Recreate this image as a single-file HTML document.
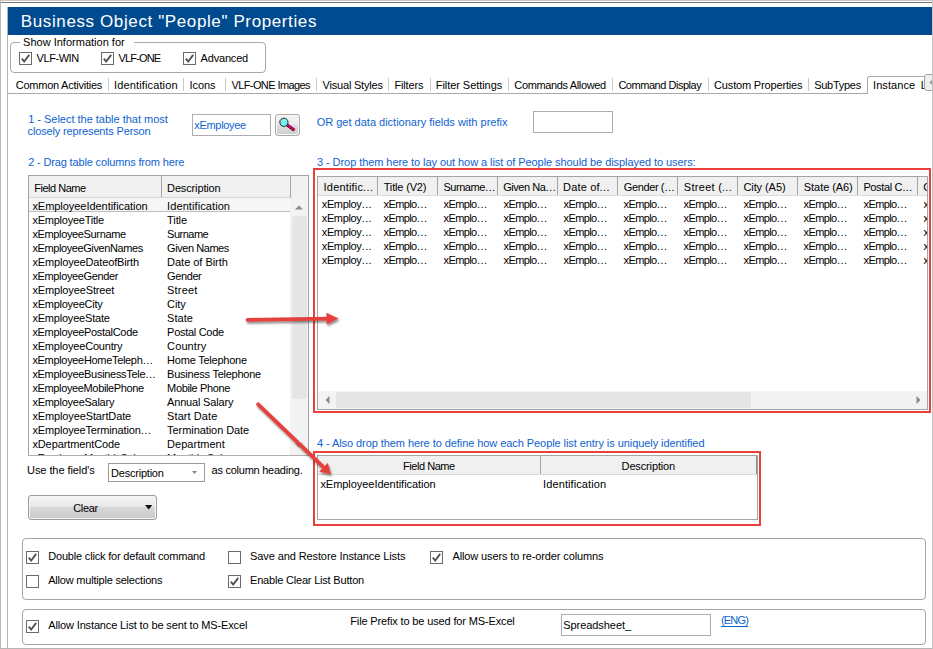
<!DOCTYPE html>
<html lang="en"><head><meta charset="utf-8"><title>Business Object "People" Properties</title>
<style>
html,body{margin:0;padding:0;background:#fff}
body{width:933px;height:649px;position:relative;overflow:hidden;font-family:'Liberation Sans', sans-serif;font-size:11px}
.t{position:absolute;white-space:pre}
</style></head><body>
<div style="position:absolute;left:0px;top:0px;width:933px;height:1px;background:#c9c9c9"></div>
<div style="position:absolute;left:0px;top:2px;width:933px;height:1px;background:#777"></div>
<div style="position:absolute;left:0px;top:0px;width:1px;height:649px;background:#b9b9b9"></div>
<div style="position:absolute;left:932px;top:0px;width:1px;height:649px;background:#c4c4c4"></div>
<div style="position:absolute;left:0px;top:648px;width:933px;height:1px;background:#b5b5b5"></div>
<div style="position:absolute;left:8px;top:7px;width:924px;height:28px;background:#004b8f"></div>
<div style="position:absolute;left:10px;top:42px;width:254px;height:29px;border:1px solid #a8a8a8;border-radius:4px"></div>
<div style="position:absolute;left:20px;top:41px;width:114px;height:3px;background:#fff"></div>
<div style="position:absolute;left:19px;top:52px;width:11px;height:11px;border:1px solid #6a6a6a;background:#fff"></div><svg style="position:absolute;left:19px;top:52px" width="13" height="13" viewBox="0 0 13 13"><path d="M2.8 6.6 L5.2 9.6 L10.2 2.9" fill="none" stroke="#505050" stroke-width="1.85" stroke-linecap="butt" stroke-linejoin="miter"/></svg>
<div style="position:absolute;left:101px;top:52px;width:11px;height:11px;border:1px solid #6a6a6a;background:#fff"></div><svg style="position:absolute;left:101px;top:52px" width="13" height="13" viewBox="0 0 13 13"><path d="M2.8 6.6 L5.2 9.6 L10.2 2.9" fill="none" stroke="#505050" stroke-width="1.85" stroke-linecap="butt" stroke-linejoin="miter"/></svg>
<div style="position:absolute;left:183px;top:52px;width:11px;height:11px;border:1px solid #6a6a6a;background:#fff"></div><svg style="position:absolute;left:183px;top:52px" width="13" height="13" viewBox="0 0 13 13"><path d="M2.8 6.6 L5.2 9.6 L10.2 2.9" fill="none" stroke="#505050" stroke-width="1.85" stroke-linecap="butt" stroke-linejoin="miter"/></svg>
<div style="position:absolute;left:108px;top:78px;width:1px;height:13px;background:#c8c8c8"></div>
<div style="position:absolute;left:183px;top:78px;width:1px;height:13px;background:#c8c8c8"></div>
<div style="position:absolute;left:225px;top:78px;width:1px;height:13px;background:#c8c8c8"></div>
<div style="position:absolute;left:316px;top:78px;width:1px;height:13px;background:#c8c8c8"></div>
<div style="position:absolute;left:388px;top:78px;width:1px;height:13px;background:#c8c8c8"></div>
<div style="position:absolute;left:430px;top:78px;width:1px;height:13px;background:#c8c8c8"></div>
<div style="position:absolute;left:508px;top:78px;width:1px;height:13px;background:#c8c8c8"></div>
<div style="position:absolute;left:612px;top:78px;width:1px;height:13px;background:#c8c8c8"></div>
<div style="position:absolute;left:708px;top:78px;width:1px;height:13px;background:#c8c8c8"></div>
<div style="position:absolute;left:808px;top:78px;width:1px;height:13px;background:#c8c8c8"></div>
<div style="position:absolute;left:8px;top:93px;width:925px;height:1px;background:#a9a9a9"></div>
<div style="position:absolute;left:7px;top:7px;width:1px;height:642px;background:#b4b4b4"></div>
<div style="position:absolute;left:867px;top:76px;width:70px;height:17px;border:1px solid #a9a9a9;border-bottom:none;border-radius:3px 0 0 0;background:#fff"></div>
<div style="position:absolute;left:192px;top:114px;width:77px;height:20px;border:1px solid #abadb3;background:#fff"></div>
<div style="position:absolute;left:275px;top:114px;width:23px;height:20px;border:1px solid #a9a9a9;border-radius:3px;box-shadow:inset 0 0 0 1px #f8f8f8;background:linear-gradient(#f3f3f3 0,#ebebeb 48%,#dddddd 52%,#cfcfcf 100%)"></div>
<svg style="position:absolute;left:275px;top:114px" width="25" height="22" viewBox="0 0 25 22">
<path d="M12.2 10.9 L19.4 16.3" stroke="#3b0a1c" stroke-width="3.1" stroke-linecap="butt"/>
<path d="M12.0 10.5 L19.3 15.9" stroke="#e6006c" stroke-width="1.9" stroke-linecap="butt"/>
<circle cx="8.9" cy="8.3" r="4.15" fill="#5cf0f2" stroke="#2a2a2a" stroke-width="1"/>
<path d="M5.1 9.8 A4.15 4.15 0 0 1 6.2 5.2" stroke="#c85a5a" stroke-width="1" fill="none"/>
<path d="M6.6 7.4 h1 M8.6 6.4 h1 M7.6 9.4 h1 M9.6 8.4 h1 M8.6 10.4 h1 M10.6 6.8 h0.8" stroke="#d8ffff" stroke-width="0.9"/>
</svg>
<div style="position:absolute;left:533px;top:111px;width:78px;height:20px;border:1px solid #abadb3;background:#fff"></div>
<div style="position:absolute;left:28px;top:175px;width:281px;height:281px;background:#fff"></div>
<div style="position:absolute;left:29px;top:176px;width:279px;height:22px;background:#f1f1f1"></div>
<div style="position:absolute;left:29px;top:197px;width:261px;height:1px;background:#d9d9d9"></div>
<div style="position:absolute;left:161px;top:176px;width:1px;height:21px;background:#a5a5a5"></div>
<div style="position:absolute;left:290px;top:176px;width:1px;height:22px;background:#a5a5a5"></div>
<div style="position:absolute;left:29px;top:198px;width:261px;height:13px;background:#f6f6f6"></div>
<div style="position:absolute;left:29px;top:211px;width:261px;height:1px;background:#bdbdbd"></div>
<div style="position:absolute;left:290px;top:198px;width:18px;height:257px;background:#f3f3f3"></div>
<svg style="position:absolute;left:295px;top:205px" width="8" height="5"><path d="M0 4.5 L4 0.5 L8 4.5Z" fill="#8a8a8a"/></svg>
<div style="position:absolute;left:291.5px;top:216px;width:15px;height:183px;background:#e6e6e6;border-radius:2px"></div>
<svg style="position:absolute;left:295px;top:443px" width="8" height="5"><path d="M0 0.5 L4 4.5 L8 0.5Z" fill="#8a8a8a"/></svg>
<div style="position:absolute;left:108px;top:463px;width:95px;height:17px;border:1px solid #9a9a9a;background:#fff"></div>
<svg style="position:absolute;left:192px;top:471px" width="5" height="3"><path d="M0 0 L5 0 L2.5 3Z" fill="#858585"/></svg>
<div style="position:absolute;left:28px;top:495px;width:127px;height:23px;border:1px solid #9c9c9c;border-radius:3px;box-shadow:inset 0 0 0 1px #f6f6f6;background:linear-gradient(#f4f4f4 0,#e9e9e9 45%,#d8d8d8 50%,#cacaca 100%)"></div>
<svg style="position:absolute;left:145px;top:505px" width="8" height="5"><path d="M0 0 L7.4 0 L3.7 4.4Z" fill="#111"/></svg>
<div style="position:absolute;left:318px;top:177px;width:609px;height:232px;background:#fff"></div>
<div style="position:absolute;left:318px;top:177px;width:609px;height:18px;background:#f0f0f0"></div>
<div style="position:absolute;left:318px;top:195px;width:609px;height:1px;background:#dcdcdc"></div>
<div style="position:absolute;left:377px;top:177px;width:1px;height:18px;background:#a5a5a5"></div>
<div style="position:absolute;left:437px;top:177px;width:1px;height:18px;background:#a5a5a5"></div>
<div style="position:absolute;left:497px;top:177px;width:1px;height:18px;background:#a5a5a5"></div>
<div style="position:absolute;left:557px;top:177px;width:1px;height:18px;background:#a5a5a5"></div>
<div style="position:absolute;left:617px;top:177px;width:1px;height:18px;background:#a5a5a5"></div>
<div style="position:absolute;left:677px;top:177px;width:1px;height:18px;background:#a5a5a5"></div>
<div style="position:absolute;left:737px;top:177px;width:1px;height:18px;background:#a5a5a5"></div>
<div style="position:absolute;left:797px;top:177px;width:1px;height:18px;background:#a5a5a5"></div>
<div style="position:absolute;left:857px;top:177px;width:1px;height:18px;background:#a5a5a5"></div>
<div style="position:absolute;left:917px;top:177px;width:1px;height:18px;background:#a5a5a5"></div>
<div style="position:absolute;left:318px;top:391px;width:609px;height:18px;background:#f3f3f3"></div>
<svg style="position:absolute;left:325px;top:396px" width="5" height="8"><path d="M4.5 0 L0.5 4 L4.5 8Z" fill="#8a8a8a"/></svg>
<svg style="position:absolute;left:916px;top:396px" width="5" height="8"><path d="M0.5 0 L4.5 4 L0.5 8Z" fill="#8a8a8a"/></svg>
<div style="position:absolute;left:336px;top:392px;width:415px;height:16px;background:#e6e6e6;border-radius:2px"></div>
<div style="position:absolute;left:318px;top:456px;width:439px;height:63px;background:#fff"></div>
<div style="position:absolute;left:318px;top:456px;width:439px;height:18px;background:#f0f0f0"></div>
<div style="position:absolute;left:318px;top:474px;width:439px;height:1px;background:#d9d9d9"></div>
<div style="position:absolute;left:540px;top:456px;width:1px;height:18px;background:#a5a5a5"></div>
<div style="position:absolute;left:756px;top:456px;width:1px;height:18px;background:#8a8a8a"></div>
<div style="position:absolute;left:22px;top:538px;width:902px;height:60px;border:1px solid #a4a4a4;border-radius:4px"></div>
<div style="position:absolute;left:22px;top:609px;width:902px;height:34px;border:1px solid #a4a4a4;border-radius:4px"></div>
<div style="position:absolute;left:26px;top:551px;width:11px;height:11px;border:1px solid #6a6a6a;background:#fff"></div><svg style="position:absolute;left:26px;top:551px" width="13" height="13" viewBox="0 0 13 13"><path d="M2.8 6.6 L5.2 9.6 L10.2 2.9" fill="none" stroke="#505050" stroke-width="1.85" stroke-linecap="butt" stroke-linejoin="miter"/></svg>
<div style="position:absolute;left:26px;top:575px;width:11px;height:11px;border:1px solid #6a6a6a;background:#fff"></div>
<div style="position:absolute;left:228px;top:551px;width:11px;height:11px;border:1px solid #6a6a6a;background:#fff"></div>
<div style="position:absolute;left:228px;top:575px;width:11px;height:11px;border:1px solid #6a6a6a;background:#fff"></div><svg style="position:absolute;left:228px;top:575px" width="13" height="13" viewBox="0 0 13 13"><path d="M2.8 6.6 L5.2 9.6 L10.2 2.9" fill="none" stroke="#505050" stroke-width="1.85" stroke-linecap="butt" stroke-linejoin="miter"/></svg>
<div style="position:absolute;left:430px;top:551px;width:11px;height:11px;border:1px solid #6a6a6a;background:#fff"></div><svg style="position:absolute;left:430px;top:551px" width="13" height="13" viewBox="0 0 13 13"><path d="M2.8 6.6 L5.2 9.6 L10.2 2.9" fill="none" stroke="#505050" stroke-width="1.85" stroke-linecap="butt" stroke-linejoin="miter"/></svg>
<div style="position:absolute;left:26px;top:620px;width:11px;height:11px;border:1px solid #6a6a6a;background:#fff"></div><svg style="position:absolute;left:26px;top:620px" width="13" height="13" viewBox="0 0 13 13"><path d="M2.8 6.6 L5.2 9.6 L10.2 2.9" fill="none" stroke="#505050" stroke-width="1.85" stroke-linecap="butt" stroke-linejoin="miter"/></svg>
<div style="position:absolute;left:561px;top:614px;width:148px;height:20px;border:1px solid #abadb3;background:#fff"></div>
<span class="t" style="left:20.80px;top:12.00px;font-size:17px;line-height:19px;color:#fff;letter-spacing:0.613px;">Business Object "People" Properties</span>
<span class="t" style="left:23.10px;top:36.00px;font-size:11px;line-height:12px;color:#000;letter-spacing:0.005px;">Show Information for</span>
<span class="t" style="left:36.60px;top:52.00px;font-size:11px;line-height:12px;color:#000;letter-spacing:-0.439px;">VLF-WIN</span>
<span class="t" style="left:118.60px;top:52.00px;font-size:11px;line-height:12px;color:#000;letter-spacing:-0.848px;">VLF-ONE</span>
<span class="t" style="left:200.60px;top:52.00px;font-size:11px;line-height:12px;color:#000;letter-spacing:-0.191px;">Advanced</span>
<span class="t" style="left:15.70px;top:79.00px;font-size:11px;line-height:12px;color:#000;letter-spacing:-0.237px;">Common Activities</span>
<span class="t" style="left:114.10px;top:79.00px;font-size:11px;line-height:12px;color:#000;letter-spacing:0.126px;">Identification</span>
<span class="t" style="left:189.60px;top:79.00px;font-size:11px;line-height:12px;color:#000;letter-spacing:-0.074px;">Icons</span>
<span class="t" style="left:231.40px;top:79.00px;font-size:11px;line-height:12px;color:#000;letter-spacing:-0.586px;">VLF-ONE Images</span>
<span class="t" style="left:322.60px;top:79.00px;font-size:11px;line-height:12px;color:#000;letter-spacing:-0.207px;">Visual Styles</span>
<span class="t" style="left:394.60px;top:79.00px;font-size:11px;line-height:12px;color:#000;letter-spacing:-0.192px;">Filters</span>
<span class="t" style="left:435.80px;top:79.00px;font-size:11px;line-height:12px;color:#000;letter-spacing:-0.061px;">Filter Settings</span>
<span class="t" style="left:514.30px;top:79.00px;font-size:11px;line-height:12px;color:#000;letter-spacing:-0.355px;">Commands Allowed</span>
<span class="t" style="left:618.40px;top:79.00px;font-size:11px;line-height:12px;color:#000;letter-spacing:-0.470px;">Command Display</span>
<span class="t" style="left:714.10px;top:79.00px;font-size:11px;line-height:12px;color:#000;letter-spacing:-0.168px;">Custom Properties</span>
<span class="t" style="left:814.20px;top:79.00px;font-size:11px;line-height:12px;color:#000;letter-spacing:-0.275px;">SubTypes</span>
<span class="t" style="left:873.00px;top:79.00px;font-size:11px;line-height:12px;color:#000;letter-spacing:0.072px;">Instance</span>
<div style="position:absolute;left:921px;top:0;width:4px;height:649px;overflow:hidden"><span class="t" style="left:-0.20px;top:79.00px;font-size:11px;line-height:12px;color:#000;">L</span></div>
<span class="t" style="left:28.20px;top:113.00px;font-size:11px;line-height:12px;color:#0e63cf;letter-spacing:-0.015px;">1 - Select the table that most</span>
<span class="t" style="left:27.60px;top:125.00px;font-size:11px;line-height:12px;color:#0e63cf;letter-spacing:-0.148px;">closely represents Person</span>
<span class="t" style="left:194.30px;top:119.00px;font-size:11px;line-height:12px;color:#0e63cf;letter-spacing:-0.315px;">xEmployee</span>
<span class="t" style="left:316.70px;top:116.00px;font-size:11px;line-height:12px;color:#0e63cf;">OR get data dictionary fields with prefix</span>
<span class="t" style="left:28.20px;top:155.60px;font-size:11px;line-height:12px;color:#0e63cf;letter-spacing:-0.152px;">2 - Drag table columns from here</span>
<span class="t" style="left:34.20px;top:182.00px;font-size:11px;line-height:12px;color:#000;letter-spacing:-0.472px;">Field Name</span>
<span class="t" style="left:167.10px;top:182.00px;font-size:11px;line-height:12px;color:#000;letter-spacing:-0.143px;">Description</span>
<span class="t" style="left:32.40px;top:200.00px;font-size:11px;line-height:12px;color:#000;letter-spacing:-0.040px;">xEmployeeIdentification</span>
<span class="t" style="left:167.10px;top:200.00px;font-size:11px;line-height:12px;color:#000;letter-spacing:0.087px;">Identification</span>
<span class="t" style="left:32.40px;top:214.00px;font-size:11px;line-height:12px;color:#000;letter-spacing:-0.238px;">xEmployeeTitle</span>
<span class="t" style="left:167.10px;top:214.00px;font-size:11px;line-height:12px;color:#000;letter-spacing:-0.094px;">Title</span>
<span class="t" style="left:32.40px;top:228.00px;font-size:11px;line-height:12px;color:#000;letter-spacing:-0.357px;">xEmployeeSurname</span>
<span class="t" style="left:167.10px;top:228.00px;font-size:11px;line-height:12px;color:#000;letter-spacing:-0.507px;">Surname</span>
<span class="t" style="left:32.40px;top:242.00px;font-size:11px;line-height:12px;color:#000;letter-spacing:-0.400px;">xEmployeeGivenNames</span>
<span class="t" style="left:167.10px;top:242.00px;font-size:11px;line-height:12px;color:#000;letter-spacing:-0.444px;">Given Names</span>
<span class="t" style="left:32.40px;top:256.00px;font-size:11px;line-height:12px;color:#000;letter-spacing:-0.145px;">xEmployeeDateofBirth</span>
<span class="t" style="left:167.10px;top:256.00px;font-size:11px;line-height:12px;color:#000;letter-spacing:-0.028px;">Date of Birth</span>
<span class="t" style="left:32.40px;top:270.00px;font-size:11px;line-height:12px;color:#000;letter-spacing:-0.358px;">xEmployeeGender</span>
<span class="t" style="left:167.10px;top:270.00px;font-size:11px;line-height:12px;color:#000;letter-spacing:-0.401px;">Gender</span>
<span class="t" style="left:32.40px;top:284.00px;font-size:11px;line-height:12px;color:#000;letter-spacing:-0.126px;">xEmployeeStreet</span>
<span class="t" style="left:167.10px;top:284.00px;font-size:11px;line-height:12px;color:#000;letter-spacing:0.188px;">Street</span>
<span class="t" style="left:32.40px;top:298.00px;font-size:11px;line-height:12px;color:#000;letter-spacing:-0.255px;">xEmployeeCity</span>
<span class="t" style="left:167.10px;top:298.00px;font-size:11px;line-height:12px;color:#000;letter-spacing:-0.118px;">City</span>
<span class="t" style="left:32.40px;top:312.00px;font-size:11px;line-height:12px;color:#000;letter-spacing:-0.201px;">xEmployeeState</span>
<span class="t" style="left:167.10px;top:312.00px;font-size:11px;line-height:12px;color:#000;letter-spacing:0.028px;">State</span>
<span class="t" style="left:32.40px;top:326.00px;font-size:11px;line-height:12px;color:#000;letter-spacing:-0.311px;">xEmployeePostalCode</span>
<span class="t" style="left:167.10px;top:326.00px;font-size:11px;line-height:12px;color:#000;letter-spacing:-0.294px;">Postal Code</span>
<span class="t" style="left:32.40px;top:340.00px;font-size:11px;line-height:12px;color:#000;letter-spacing:-0.182px;">xEmployeeCountry</span>
<span class="t" style="left:167.10px;top:340.00px;font-size:11px;line-height:12px;color:#000;letter-spacing:0.111px;">Country</span>
<span class="t" style="left:32.40px;top:354.00px;font-size:11px;line-height:12px;color:#000;letter-spacing:-0.321px;">xEmployeeHomeTeleph<span style="letter-spacing:0.390px;margin-left:0.321px">...</span></span>
<span class="t" style="left:167.10px;top:354.00px;font-size:11px;line-height:12px;color:#000;letter-spacing:-0.228px;">Home Telephone</span>
<span class="t" style="left:32.40px;top:368.00px;font-size:11px;line-height:12px;color:#000;letter-spacing:-0.302px;">xEmployeeBusinessTele<span style="letter-spacing:0.390px;margin-left:0.302px">...</span></span>
<span class="t" style="left:167.10px;top:368.00px;font-size:11px;line-height:12px;color:#000;letter-spacing:-0.245px;">Business Telephone</span>
<span class="t" style="left:32.40px;top:382.00px;font-size:11px;line-height:12px;color:#000;letter-spacing:-0.360px;">xEmployeeMobilePhone</span>
<span class="t" style="left:167.10px;top:382.00px;font-size:11px;line-height:12px;color:#000;letter-spacing:-0.371px;">Mobile Phone</span>
<span class="t" style="left:32.40px;top:396.00px;font-size:11px;line-height:12px;color:#000;letter-spacing:-0.257px;">xEmployeeSalary</span>
<span class="t" style="left:167.10px;top:396.00px;font-size:11px;line-height:12px;color:#000;letter-spacing:-0.183px;">Annual Salary</span>
<span class="t" style="left:32.40px;top:410.00px;font-size:11px;line-height:12px;color:#000;letter-spacing:-0.123px;">xEmployeeStartDate</span>
<span class="t" style="left:167.10px;top:410.00px;font-size:11px;line-height:12px;color:#000;letter-spacing:0.074px;">Start Date</span>
<span class="t" style="left:32.40px;top:424.00px;font-size:11px;line-height:12px;color:#000;letter-spacing:-0.152px;">xEmployeeTermination<span style="letter-spacing:0.390px;margin-left:0.152px">...</span></span>
<span class="t" style="left:167.10px;top:424.00px;font-size:11px;line-height:12px;color:#000;letter-spacing:-0.070px;">Termination Date</span>
<span class="t" style="left:32.40px;top:438.00px;font-size:11px;line-height:12px;color:#000;letter-spacing:-0.106px;">xDepartmentCode</span>
<span class="t" style="left:167.10px;top:438.00px;font-size:11px;line-height:12px;color:#000;letter-spacing:0.024px;">Department</span>
<div style="position:absolute;left:0;top:0px;width:933px;height:455px;overflow:hidden"><span class="t" style="left:32.40px;top:452.00px;font-size:11px;line-height:12px;color:#000;letter-spacing:-0.301px;">xEmployeeMonthlySalary</span></div>
<div style="position:absolute;left:0;top:0px;width:933px;height:455px;overflow:hidden"><span class="t" style="left:167.10px;top:452.00px;font-size:11px;line-height:12px;color:#000;letter-spacing:-0.205px;">Monthly Salary</span></div>
<span class="t" style="left:27.10px;top:463.50px;font-size:11px;line-height:12px;color:#000;letter-spacing:-0.082px;">Use the field's</span>
<span class="t" style="left:111.10px;top:467.00px;font-size:11px;line-height:12px;color:#000;letter-spacing:-0.223px;">Description</span>
<span class="t" style="left:211.60px;top:463.50px;font-size:11px;line-height:12px;color:#000;letter-spacing:-0.253px;">as column heading.</span>
<span class="t" style="left:73.20px;top:502.00px;font-size:11px;line-height:12px;color:#000;letter-spacing:-0.299px;">Clear</span>
<span class="t" style="left:317.00px;top:156.20px;font-size:11px;line-height:12px;color:#0e63cf;letter-spacing:-0.068px;">3 - Drop them here to lay out how a list of People should be displayed to users:</span>
<span class="t" style="left:323.60px;top:181.00px;font-size:11px;line-height:12px;color:#000;letter-spacing:0.185px;">Identific<span style="letter-spacing:0.390px;margin-left:-0.185px">...</span></span>
<span class="t" style="left:383.70px;top:181.00px;font-size:11px;line-height:12px;color:#000;letter-spacing:-0.158px;">Title (V2)</span>
<span class="t" style="left:443.50px;top:181.00px;font-size:11px;line-height:12px;color:#000;letter-spacing:-0.473px;">Surname<span style="letter-spacing:0.390px;margin-left:0.473px">...</span></span>
<span class="t" style="left:503.30px;top:181.00px;font-size:11px;line-height:12px;color:#000;letter-spacing:-0.480px;">Given Na<span style="letter-spacing:0.390px;margin-left:0.480px">...</span></span>
<span class="t" style="left:563.10px;top:181.00px;font-size:11px;line-height:12px;color:#000;letter-spacing:0.172px;">Date of<span style="letter-spacing:0.390px;margin-left:-0.172px">...</span></span>
<span class="t" style="left:623.80px;top:181.00px;font-size:11px;line-height:12px;color:#000;letter-spacing:-0.389px;">Gender (<span style="letter-spacing:0.390px;margin-left:0.389px">...</span></span>
<span class="t" style="left:683.80px;top:181.00px;font-size:11px;line-height:12px;color:#000;letter-spacing:0.289px;">Street (<span style="letter-spacing:0.390px;margin-left:-0.289px">...</span></span>
<span class="t" style="left:743.40px;top:181.00px;font-size:11px;line-height:12px;color:#000;letter-spacing:-0.073px;">City (A5)</span>
<span class="t" style="left:803.80px;top:181.00px;font-size:11px;line-height:12px;color:#000;letter-spacing:-0.059px;">State (A6)</span>
<span class="t" style="left:863.40px;top:181.00px;font-size:11px;line-height:12px;color:#000;letter-spacing:-0.368px;">Postal C<span style="letter-spacing:0.390px;margin-left:0.368px">...</span></span>
<div style="position:absolute;left:918px;top:0;width:9px;height:649px;overflow:hidden"><span class="t" style="left:5.20px;top:181.00px;font-size:11px;line-height:12px;color:#000;">C...</span></div>
<span class="t" style="left:321.80px;top:198.00px;font-size:11px;line-height:12px;color:#000;letter-spacing:-0.381px;">xEmploy<span style="letter-spacing:0.390px;margin-left:0.381px">...</span></span>
<span class="t" style="left:383.60px;top:198.00px;font-size:11px;line-height:12px;color:#000;letter-spacing:-0.637px;">xEmplo<span style="letter-spacing:0.390px;margin-left:0.637px">...</span></span>
<span class="t" style="left:443.60px;top:198.00px;font-size:11px;line-height:12px;color:#000;letter-spacing:-0.637px;">xEmplo<span style="letter-spacing:0.390px;margin-left:0.637px">...</span></span>
<span class="t" style="left:503.60px;top:198.00px;font-size:11px;line-height:12px;color:#000;letter-spacing:-0.637px;">xEmplo<span style="letter-spacing:0.390px;margin-left:0.637px">...</span></span>
<span class="t" style="left:563.60px;top:198.00px;font-size:11px;line-height:12px;color:#000;letter-spacing:-0.637px;">xEmplo<span style="letter-spacing:0.390px;margin-left:0.637px">...</span></span>
<span class="t" style="left:623.60px;top:198.00px;font-size:11px;line-height:12px;color:#000;letter-spacing:-0.637px;">xEmplo<span style="letter-spacing:0.390px;margin-left:0.637px">...</span></span>
<span class="t" style="left:683.60px;top:198.00px;font-size:11px;line-height:12px;color:#000;letter-spacing:-0.637px;">xEmplo<span style="letter-spacing:0.390px;margin-left:0.637px">...</span></span>
<span class="t" style="left:743.60px;top:198.00px;font-size:11px;line-height:12px;color:#000;letter-spacing:-0.637px;">xEmplo<span style="letter-spacing:0.390px;margin-left:0.637px">...</span></span>
<span class="t" style="left:803.60px;top:198.00px;font-size:11px;line-height:12px;color:#000;letter-spacing:-0.637px;">xEmplo<span style="letter-spacing:0.390px;margin-left:0.637px">...</span></span>
<span class="t" style="left:863.60px;top:198.00px;font-size:11px;line-height:12px;color:#000;letter-spacing:-0.637px;">xEmplo<span style="letter-spacing:0.390px;margin-left:0.637px">...</span></span>
<div style="position:absolute;left:918px;top:0;width:9px;height:649px;overflow:hidden"><span class="t" style="left:5.60px;top:198.00px;font-size:11px;line-height:12px;color:#000;">xEmplo...</span></div>
<span class="t" style="left:321.80px;top:212.00px;font-size:11px;line-height:12px;color:#000;letter-spacing:-0.381px;">xEmploy<span style="letter-spacing:0.390px;margin-left:0.381px">...</span></span>
<span class="t" style="left:383.60px;top:212.00px;font-size:11px;line-height:12px;color:#000;letter-spacing:-0.637px;">xEmplo<span style="letter-spacing:0.390px;margin-left:0.637px">...</span></span>
<span class="t" style="left:443.60px;top:212.00px;font-size:11px;line-height:12px;color:#000;letter-spacing:-0.637px;">xEmplo<span style="letter-spacing:0.390px;margin-left:0.637px">...</span></span>
<span class="t" style="left:503.60px;top:212.00px;font-size:11px;line-height:12px;color:#000;letter-spacing:-0.637px;">xEmplo<span style="letter-spacing:0.390px;margin-left:0.637px">...</span></span>
<span class="t" style="left:563.60px;top:212.00px;font-size:11px;line-height:12px;color:#000;letter-spacing:-0.637px;">xEmplo<span style="letter-spacing:0.390px;margin-left:0.637px">...</span></span>
<span class="t" style="left:623.60px;top:212.00px;font-size:11px;line-height:12px;color:#000;letter-spacing:-0.637px;">xEmplo<span style="letter-spacing:0.390px;margin-left:0.637px">...</span></span>
<span class="t" style="left:683.60px;top:212.00px;font-size:11px;line-height:12px;color:#000;letter-spacing:-0.637px;">xEmplo<span style="letter-spacing:0.390px;margin-left:0.637px">...</span></span>
<span class="t" style="left:743.60px;top:212.00px;font-size:11px;line-height:12px;color:#000;letter-spacing:-0.637px;">xEmplo<span style="letter-spacing:0.390px;margin-left:0.637px">...</span></span>
<span class="t" style="left:803.60px;top:212.00px;font-size:11px;line-height:12px;color:#000;letter-spacing:-0.637px;">xEmplo<span style="letter-spacing:0.390px;margin-left:0.637px">...</span></span>
<span class="t" style="left:863.60px;top:212.00px;font-size:11px;line-height:12px;color:#000;letter-spacing:-0.637px;">xEmplo<span style="letter-spacing:0.390px;margin-left:0.637px">...</span></span>
<div style="position:absolute;left:918px;top:0;width:9px;height:649px;overflow:hidden"><span class="t" style="left:5.60px;top:212.00px;font-size:11px;line-height:12px;color:#000;">xEmplo...</span></div>
<span class="t" style="left:321.80px;top:226.00px;font-size:11px;line-height:12px;color:#000;letter-spacing:-0.381px;">xEmploy<span style="letter-spacing:0.390px;margin-left:0.381px">...</span></span>
<span class="t" style="left:383.60px;top:226.00px;font-size:11px;line-height:12px;color:#000;letter-spacing:-0.637px;">xEmplo<span style="letter-spacing:0.390px;margin-left:0.637px">...</span></span>
<span class="t" style="left:443.60px;top:226.00px;font-size:11px;line-height:12px;color:#000;letter-spacing:-0.637px;">xEmplo<span style="letter-spacing:0.390px;margin-left:0.637px">...</span></span>
<span class="t" style="left:503.60px;top:226.00px;font-size:11px;line-height:12px;color:#000;letter-spacing:-0.637px;">xEmplo<span style="letter-spacing:0.390px;margin-left:0.637px">...</span></span>
<span class="t" style="left:563.60px;top:226.00px;font-size:11px;line-height:12px;color:#000;letter-spacing:-0.637px;">xEmplo<span style="letter-spacing:0.390px;margin-left:0.637px">...</span></span>
<span class="t" style="left:623.60px;top:226.00px;font-size:11px;line-height:12px;color:#000;letter-spacing:-0.637px;">xEmplo<span style="letter-spacing:0.390px;margin-left:0.637px">...</span></span>
<span class="t" style="left:683.60px;top:226.00px;font-size:11px;line-height:12px;color:#000;letter-spacing:-0.637px;">xEmplo<span style="letter-spacing:0.390px;margin-left:0.637px">...</span></span>
<span class="t" style="left:743.60px;top:226.00px;font-size:11px;line-height:12px;color:#000;letter-spacing:-0.637px;">xEmplo<span style="letter-spacing:0.390px;margin-left:0.637px">...</span></span>
<span class="t" style="left:803.60px;top:226.00px;font-size:11px;line-height:12px;color:#000;letter-spacing:-0.637px;">xEmplo<span style="letter-spacing:0.390px;margin-left:0.637px">...</span></span>
<span class="t" style="left:863.60px;top:226.00px;font-size:11px;line-height:12px;color:#000;letter-spacing:-0.637px;">xEmplo<span style="letter-spacing:0.390px;margin-left:0.637px">...</span></span>
<div style="position:absolute;left:918px;top:0;width:9px;height:649px;overflow:hidden"><span class="t" style="left:5.60px;top:226.00px;font-size:11px;line-height:12px;color:#000;">xEmplo...</span></div>
<span class="t" style="left:321.80px;top:240.00px;font-size:11px;line-height:12px;color:#000;letter-spacing:-0.381px;">xEmploy<span style="letter-spacing:0.390px;margin-left:0.381px">...</span></span>
<span class="t" style="left:383.60px;top:240.00px;font-size:11px;line-height:12px;color:#000;letter-spacing:-0.637px;">xEmplo<span style="letter-spacing:0.390px;margin-left:0.637px">...</span></span>
<span class="t" style="left:443.60px;top:240.00px;font-size:11px;line-height:12px;color:#000;letter-spacing:-0.637px;">xEmplo<span style="letter-spacing:0.390px;margin-left:0.637px">...</span></span>
<span class="t" style="left:503.60px;top:240.00px;font-size:11px;line-height:12px;color:#000;letter-spacing:-0.637px;">xEmplo<span style="letter-spacing:0.390px;margin-left:0.637px">...</span></span>
<span class="t" style="left:563.60px;top:240.00px;font-size:11px;line-height:12px;color:#000;letter-spacing:-0.637px;">xEmplo<span style="letter-spacing:0.390px;margin-left:0.637px">...</span></span>
<span class="t" style="left:623.60px;top:240.00px;font-size:11px;line-height:12px;color:#000;letter-spacing:-0.637px;">xEmplo<span style="letter-spacing:0.390px;margin-left:0.637px">...</span></span>
<span class="t" style="left:683.60px;top:240.00px;font-size:11px;line-height:12px;color:#000;letter-spacing:-0.637px;">xEmplo<span style="letter-spacing:0.390px;margin-left:0.637px">...</span></span>
<span class="t" style="left:743.60px;top:240.00px;font-size:11px;line-height:12px;color:#000;letter-spacing:-0.637px;">xEmplo<span style="letter-spacing:0.390px;margin-left:0.637px">...</span></span>
<span class="t" style="left:803.60px;top:240.00px;font-size:11px;line-height:12px;color:#000;letter-spacing:-0.637px;">xEmplo<span style="letter-spacing:0.390px;margin-left:0.637px">...</span></span>
<span class="t" style="left:863.60px;top:240.00px;font-size:11px;line-height:12px;color:#000;letter-spacing:-0.637px;">xEmplo<span style="letter-spacing:0.390px;margin-left:0.637px">...</span></span>
<div style="position:absolute;left:918px;top:0;width:9px;height:649px;overflow:hidden"><span class="t" style="left:5.60px;top:240.00px;font-size:11px;line-height:12px;color:#000;">xEmplo...</span></div>
<span class="t" style="left:321.80px;top:254.00px;font-size:11px;line-height:12px;color:#000;letter-spacing:-0.381px;">xEmploy<span style="letter-spacing:0.390px;margin-left:0.381px">...</span></span>
<span class="t" style="left:383.60px;top:254.00px;font-size:11px;line-height:12px;color:#000;letter-spacing:-0.637px;">xEmplo<span style="letter-spacing:0.390px;margin-left:0.637px">...</span></span>
<span class="t" style="left:443.60px;top:254.00px;font-size:11px;line-height:12px;color:#000;letter-spacing:-0.637px;">xEmplo<span style="letter-spacing:0.390px;margin-left:0.637px">...</span></span>
<span class="t" style="left:503.60px;top:254.00px;font-size:11px;line-height:12px;color:#000;letter-spacing:-0.637px;">xEmplo<span style="letter-spacing:0.390px;margin-left:0.637px">...</span></span>
<span class="t" style="left:563.60px;top:254.00px;font-size:11px;line-height:12px;color:#000;letter-spacing:-0.637px;">xEmplo<span style="letter-spacing:0.390px;margin-left:0.637px">...</span></span>
<span class="t" style="left:623.60px;top:254.00px;font-size:11px;line-height:12px;color:#000;letter-spacing:-0.637px;">xEmplo<span style="letter-spacing:0.390px;margin-left:0.637px">...</span></span>
<span class="t" style="left:683.60px;top:254.00px;font-size:11px;line-height:12px;color:#000;letter-spacing:-0.637px;">xEmplo<span style="letter-spacing:0.390px;margin-left:0.637px">...</span></span>
<span class="t" style="left:743.60px;top:254.00px;font-size:11px;line-height:12px;color:#000;letter-spacing:-0.637px;">xEmplo<span style="letter-spacing:0.390px;margin-left:0.637px">...</span></span>
<span class="t" style="left:803.60px;top:254.00px;font-size:11px;line-height:12px;color:#000;letter-spacing:-0.637px;">xEmplo<span style="letter-spacing:0.390px;margin-left:0.637px">...</span></span>
<span class="t" style="left:863.60px;top:254.00px;font-size:11px;line-height:12px;color:#000;letter-spacing:-0.637px;">xEmplo<span style="letter-spacing:0.390px;margin-left:0.637px">...</span></span>
<div style="position:absolute;left:918px;top:0;width:9px;height:649px;overflow:hidden"><span class="t" style="left:5.60px;top:254.00px;font-size:11px;line-height:12px;color:#000;">xEmplo...</span></div>
<span class="t" style="left:316.90px;top:437.30px;font-size:11px;line-height:12px;color:#0e63cf;letter-spacing:-0.068px;">4 - Also drop them here to define how each People list entry is uniquely identified</span>
<span class="t" style="left:403.10px;top:460.00px;font-size:11px;line-height:12px;color:#000;letter-spacing:-0.472px;">Field Name</span>
<span class="t" style="left:621.60px;top:460.00px;font-size:11px;line-height:12px;color:#000;letter-spacing:-0.143px;">Description</span>
<span class="t" style="left:320.40px;top:478.00px;font-size:11px;line-height:12px;color:#000;letter-spacing:-0.040px;">xEmployeeIdentification</span>
<span class="t" style="left:543.10px;top:478.00px;font-size:11px;line-height:12px;color:#000;letter-spacing:0.095px;">Identification</span>
<span class="t" style="left:48.20px;top:550.00px;font-size:11px;line-height:12px;color:#000;letter-spacing:-0.182px;">Double click for default command</span>
<span class="t" style="left:48.20px;top:574.00px;font-size:11px;line-height:12px;color:#000;letter-spacing:-0.205px;">Allow multiple selections</span>
<span class="t" style="left:250.00px;top:550.00px;font-size:11px;line-height:12px;color:#000;letter-spacing:-0.099px;">Save and Restore Instance Lists</span>
<span class="t" style="left:250.00px;top:574.00px;font-size:11px;line-height:12px;color:#000;letter-spacing:-0.193px;">Enable Clear List Button</span>
<span class="t" style="left:452.50px;top:550.00px;font-size:11px;line-height:12px;color:#000;letter-spacing:-0.122px;">Allow users to re-order columns</span>
<span class="t" style="left:48.20px;top:619.00px;font-size:11px;line-height:12px;color:#000;letter-spacing:-0.137px;">Allow Instance List to be sent to MS-Excel</span>
<span class="t" style="left:350.30px;top:615.00px;font-size:11px;line-height:12px;color:#000;letter-spacing:-0.142px;">File Prefix to be used for MS-Excel</span>
<span class="t" style="left:563.20px;top:619.00px;font-size:11px;line-height:12px;color:#000;letter-spacing:-0.055px;">Spreadsheet_</span>
<span class="t" style="left:720.90px;top:614.00px;font-size:11px;line-height:12px;color:#0a66cc;letter-spacing:-0.768px;text-decoration:underline;text-decoration-skip-ink:none;text-underline-offset:1.5px;">(ENG)</span>
<div style="position:absolute;left:924px;top:74px;width:10px;height:15px;border:1px solid #a5a5a5;border-radius:3px;background:#efefef"></div>
<svg style="position:absolute;left:929px;top:80px" width="3" height="5"><path d="M3 0 L0.3 2.5 L3 5Z" fill="#9a9a9a"/></svg>
<div style="position:absolute;left:932px;top:0px;width:1px;height:649px;background:#c4c4c4"></div>
<div style="position:absolute;left:28px;top:175px;width:279px;height:279px;border:1px solid #a3a3a3;border-bottom-color:#b0b0b0"></div>
<div style="position:absolute;left:317px;top:176px;width:609px;height:232px;border:1px solid #a3a5ab"></div>
<div style="position:absolute;left:313px;top:168px;width:614px;height:241px;border:2px solid #e8403a"></div>
<div style="position:absolute;left:317px;top:455px;width:439px;height:63px;border:1px solid #a3a5ab"></div>
<div style="position:absolute;left:313px;top:451px;width:444px;height:71px;border:2px solid #e8403a"></div>
<svg style="position:absolute;left:0;top:0;overflow:visible" width="933" height="649">
<defs><filter id="sh" x="-20%" y="-20%" width="140%" height="160%"><feGaussianBlur in="SourceAlpha" stdDeviation="1.3"/><feOffset dx="1.2" dy="2"/><feComponentTransfer><feFuncA type="linear" slope="0.45"/></feComponentTransfer><feMerge><feMergeNode/><feMergeNode in="SourceGraphic"/></feMerge></filter></defs>
<g filter="url(#sh)" fill="#e5403c" stroke="#e5403c">
<path d="M247.6 319.9 L328 318.7" stroke-width="3.8" stroke-linecap="round" fill="none"/>
<path d="M326.6 313 L338.4 318.6 L326.8 324.3Z" stroke-width="0.3"/>
<path d="M258.1 404.3 L322.9 466.6" stroke-width="3.8" stroke-linecap="round" fill="none"/>
<path d="M327.7 463.1 L330.9 474.2 L319.5 471.6Z" stroke-width="0.3"/>
</g></svg>
</body></html>
